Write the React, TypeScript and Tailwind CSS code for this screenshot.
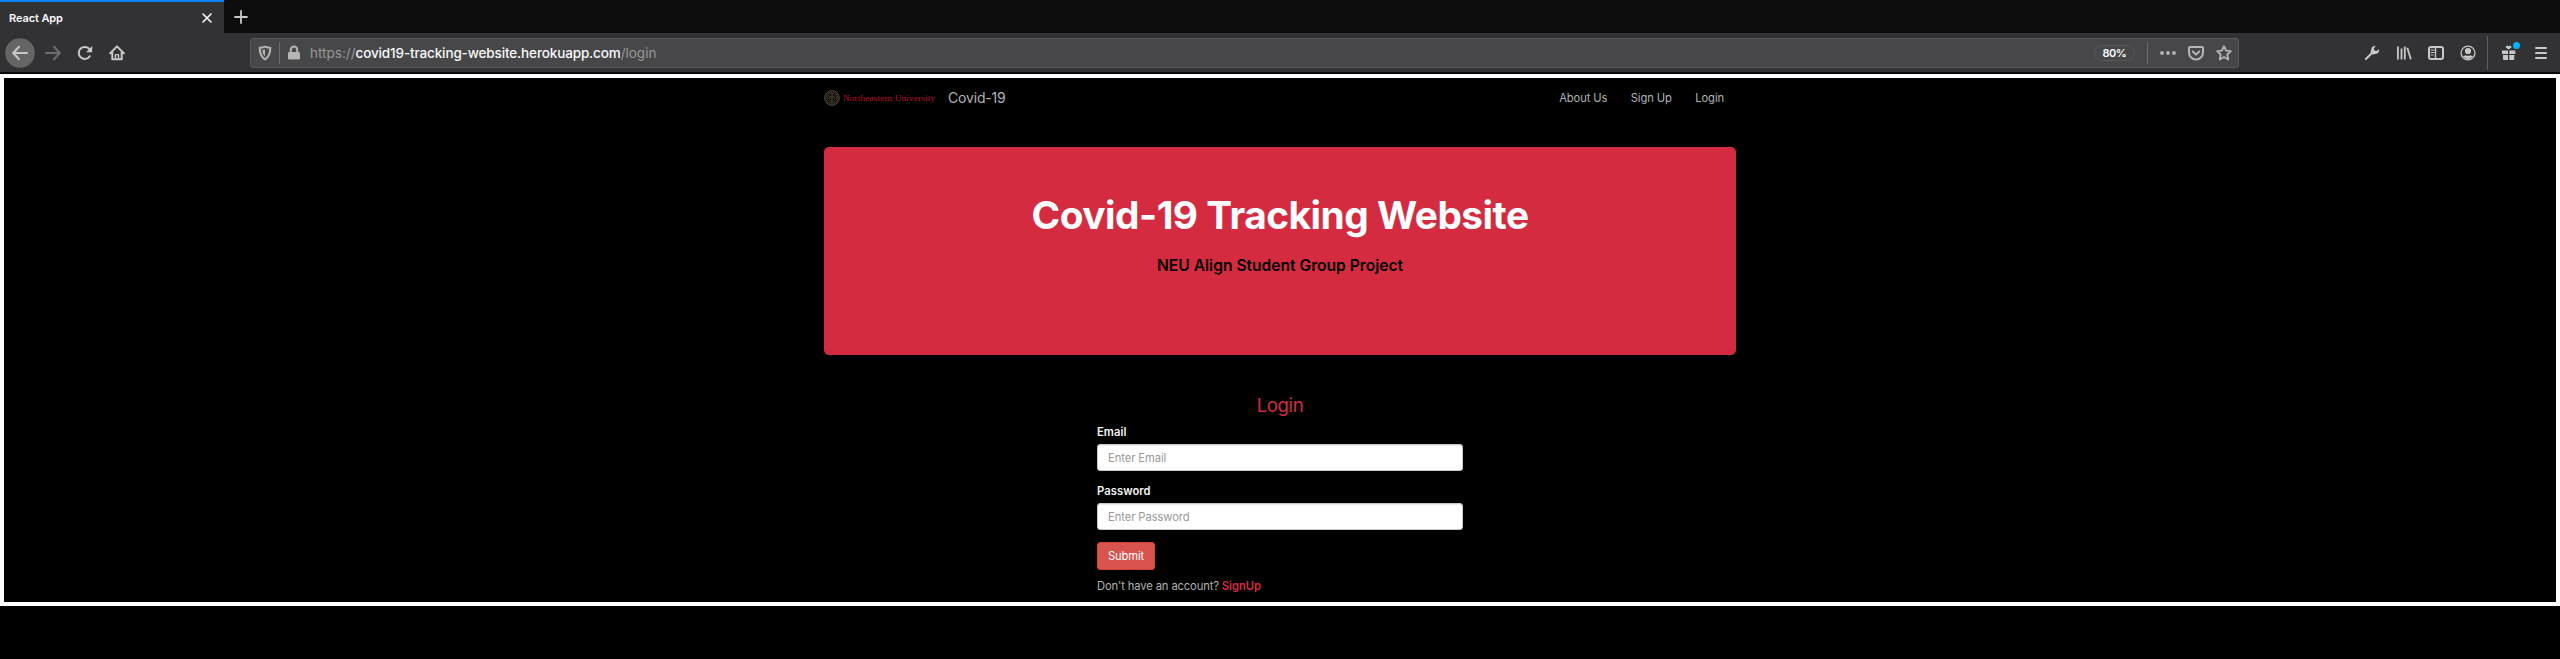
import React from "react";

function Icon({ children, className = "" }: { children: React.ReactNode; className?: string }) {
  return (
    <svg
      viewBox="0 0 16 16"
      className={"block size-4 shrink-0 " + className}
      fill="none"
      stroke="currentColor"
      strokeWidth="2"
      strokeLinecap="round"
      strokeLinejoin="round"
    >
      {children}
    </svg>
  );
}

function TabStrip() {
  return (
    <div className="flex h-[33px] bg-[#0c0c0d]">
      <div className="flex w-56 items-center justify-between border-t-2 border-[#0a84ff] bg-[#323234] pr-[9px] pl-[9px] text-[#f9f9fa]">
        <span className="text-[11px] leading-4 font-semibold tracking-[-0.1px]">React App</span>
        <Icon>
          <path d="M4 4l8 8M12 4l-8 8" strokeWidth="1.600" />
        </Icon>
      </div>
      <div className="flex w-[34px] items-center justify-center text-[#c8c8c9]">
        <Icon>
          <path d="M8 2v12M2 8h12" strokeWidth="1.800" />
        </Icon>
      </div>
    </div>
  );
}

function AddressBar() {
  return (
    <div className="ml-[125px] flex h-[30px] w-[1989px] shrink-0 items-center rounded-[3px] border border-[#58585a] bg-[#474749] text-[#b5b5b6]">
      <Icon className="ml-[6px]">
        <path d="M8 1.6c2 .9 3.800 1.200 5.300 1.200 0 5.200-.9 9-5.300 11.600C3.600 11.800 2.700 8 2.700 2.800c1.500 0 3.300-.3 5.300-1.200z" />
        <path d="M8 4.600v6.800C6.300 10 5.500 7.800 5.400 5.100z" fill="currentColor" stroke="none" />
      </Icon>
      <div className="ml-[6px] h-[22px] w-px bg-[#6a6a6d]" />
      <Icon className="ml-[6px]">
        <path d="M4.800 7V4.700a3.200 3.200 0 0 1 6.400 0V7" />
        <rect x="2" y="7" width="12" height="7.500" rx="1.200" fill="currentColor" stroke="none" />
      </Icon>
      <div className="ml-2 text-[13.5px] leading-5 whitespace-nowrap text-[#98989a]">
        <span>https://</span>
        <span className="font-medium tracking-[-0.13px] text-[#f9f9fa]">covid19-tracking-website.herokuapp.com</span>
        <span>/login</span>
      </div>
      <div className="ml-auto flex h-4 w-[41px] items-center justify-center rounded-full border border-[#58585b] text-[11px] font-semibold tracking-[-0.5px] text-[#f9f9fa]">
        80%
      </div>
      <div className="ml-3 h-[22px] w-px bg-[#6a6a6d]" />
      <Icon className="ml-3">
        <g fill="currentColor" stroke="none">
          <circle cx="2" cy="8" r="1.900" />
          <circle cx="8" cy="8" r="1.900" />
          <circle cx="14" cy="8" r="1.900" />
        </g>
      </Icon>
      <Icon className="ml-3">
        <path d="M2 2h12a1 1 0 0 1 1 1v4.500a7 7 0 0 1-14 0V3a1 1 0 0 1 1-1z" />
        <path d="M4.800 6.500L8 9.600l3.200-3.100" />
      </Icon>
      <Icon className="mr-[6px] ml-3">
        <path
          d="M8 1.200l2.100 4.500 4.700.5-3.500 3.300 1 5L8 12l-4.300 2.500 1-5L1.200 6.200l4.700-.5z"
          strokeWidth="1.800"
        />
      </Icon>
    </div>
  );
}

function Toolbar() {
  return (
    <div className="flex h-10 items-center border-b border-[#0c0c0d] bg-[#323234] pt-px pr-[11px] pl-1 text-[#c8c8c9]">
      <div className="flex size-8 items-center justify-center rounded-full border border-[#2a2a2b] bg-[#656566]">
        <Icon>
          <path d="M15 8H1.500M7 1.800L1.200 8 7 14.200" />
        </Icon>
      </div>
      <Icon className="ml-[9px] text-[#6c6c6e]">
        <path d="M1 8h13.500M9 1.800L14.800 8 9 14.200" />
      </Icon>
      <Icon className="ml-4">
        <path d="M12.800 11.200A6 6 0 1 1 12.600 4.400" />
        <path d="M15.200 1v6.200H9z" fill="currentColor" stroke="none" />
      </Icon>
      <Icon className="ml-4">
        <path d="M1.200 8.200L8 1.400l6.800 6.800M3.300 7.500v6.700h9.400V7.500" />
        <path d="M6.500 14V9.600h3V14" strokeWidth="1.400" />
      </Icon>
      <AddressBar />
      <Icon className="ml-[125px]">
        <path d="M1.900 14.100l6.500-6.500" strokeWidth="2.100" />
        <path
          d="M14.900 4.200l-2.400 1.900-2.100-.6-.6-2.100L11.800 1C9.400.500 6.900 2 7.100 5.200c0 .9-.3 1.300-.8 1.800l2.700 2.700c.5-.5 1-.8 1.800-.8 3.200.2 4.800-2.100 4.100-4.700z"
          fill="currentColor"
          stroke="none"
        />
      </Icon>
      <Icon className="ml-4">
        <path d="M1.900 1.500v13M5.500 3.500v11M8.800 1.500v13M11.300 2.700l3.500 11.500" strokeWidth="1.800" strokeLinecap="butt" />
      </Icon>
      <Icon className="ml-4">
        <rect x="1" y="2" width="14" height="12" rx="2" />
        <path d="M7.500 2v12" strokeWidth="1.400" />
        <path d="M3 5h3M3 7.500h3M3 10h2" strokeWidth="1" />
      </Icon>
      <Icon className="ml-4">
        <circle cx="8" cy="8" r="6.900" strokeWidth="1.300" />
        <circle cx="8" cy="6" r="3.100" fill="currentColor" stroke="none" />
        <path d="M3 11.200c1.300 0 2-1 2.600-1 1 .8 3.800.8 4.800 0 .6 0 1.300 1 2.600 1-1 1.600-3 2.700-5 2.700s-4-1.100-5-2.700z" fill="currentColor" stroke="none" />
      </Icon>
      <div className="ml-[11px] h-[34px] w-px bg-[#5f5f62]" />
      <div className="relative ml-[13px]">
        <Icon>
          <g fill="currentColor" stroke="none">
            <path d="M1 5.500h6V9H1zM8.300 5.500h6V9h-6zM2 10h5v5H3a1 1 0 0 1-1-1zM8.300 10h5v4a1 1 0 0 1-1 1h-4z" />
            <path d="M7.600 4.500L4.800 2.600C4.500 1 6 .2 7.600 1.200c1.600-1 3.100-.2 2.800 1.400z" />
          </g>
        </Icon>
        <div className="absolute -top-[3px] left-3 size-[7px] rounded-full bg-[#00b3ff]" />
      </div>
      <Icon className="ml-4">
        <path d="M3 3h10M3 8h10M3 13h10" />
      </Icon>
    </div>
  );
}

function Seal() {
  return (
    <svg viewBox="0 0 16 16" className="size-4 shrink-0" fill="none" stroke="#5a4d38">
      <circle cx="8" cy="8" r="7.300" strokeWidth="1" />
      <circle cx="8" cy="8" r="6" strokeWidth="1.600" strokeDasharray="1.200 .7" stroke="#463c2c" />
      <circle cx="8" cy="8" r="4.600" strokeWidth=".7" />
      <path d="M5.300 6.200h5.400v2.200c0 1.800-1.300 2.600-2.700 3.200-1.400-.6-2.700-1.400-2.700-3.200zM8 4v7M5.500 8h5" strokeWidth=".8" />
    </svg>
  );
}

function Navbar() {
  return (
    <nav className="flex h-[40px] items-center text-[#b0b4b8]">
      <Seal />
      <span className="ml-[3px] w-[92px] font-['Liberation_Serif',serif] text-[9px] leading-4 tracking-[0.24px] whitespace-nowrap text-[#c00d26]">
        Northeastern University
      </span>
      <span className="ml-[13px] text-[14px] leading-5 tracking-[-0.18px]">Covid-19</span>
      <div className="mr-3 ml-auto flex gap-[23.5px] text-[11.2px] leading-4 tracking-[-0.1px]">
        <span>About Us</span>
        <span>Sign Up</span>
        <span>Login</span>
      </div>
    </nav>
  );
}

function Field({ label, placeholder, type }: { label: string; placeholder: string; type: string }) {
  return (
    <label className="mb-3 block">
      <span className="block h-5 text-[11.2px] leading-4 font-semibold tracking-[0.08px] text-[#f4f4f4]">{label}</span>
      <input
        type={type}
        placeholder={placeholder}
        className="block h-[27px] w-full rounded-[3px] border border-[#c8c8c8] bg-white px-[10px] text-[11.2px] leading-4 tracking-[-0.07px] shadow-[inset_0_1px_1px_rgba(0,0,0,0.075)] placeholder:text-[#999999]"
      />
    </label>
  );
}

export default function App() {
  return (
    <div className="h-[659px] w-[2560px] overflow-hidden bg-black font-[Inter,sans-serif]">
      <TabStrip />
      <Toolbar />
      <main className="mt-px h-[532px] border-4 border-white bg-black">
        <div className="mx-auto w-[912px]">
          <Navbar />
          <section className="mt-[29px] h-[208px] rounded-[5px] bg-[#d42b41] pt-[43px] text-center">
            <h1 className="text-[38.8px] leading-[50px] font-bold tracking-[-0.5px] whitespace-nowrap text-white">Covid-19 Tracking Website</h1>
            <p className="mt-[14px] text-[15.6px] leading-6 font-semibold text-black">NEU Align Student Group Project</p>
          </section>
          <form className="mx-auto mt-[38px] w-[366px]">
            <h2 className="h-[31px] text-center text-[18.6px] leading-6 tracking-[-0.4px] text-[#d42b41]">Login</h2>
            <Field label="Email" placeholder="Enter Email" type="email" />
            <Field label="Password" placeholder="Enter Password" type="password" />
            <button type="button" className="block h-7 w-[58px] rounded-[3px] border border-[#d43f3a] bg-[#d9534f] text-[11.2px] leading-4 tracking-[-0.1px] text-white">
              Submit
            </button>
            <p className="mt-2 text-[11.2px] leading-4 tracking-[-0.12px] whitespace-nowrap text-[#b3b3b3]">
              Don't have an account? <a className="font-semibold tracking-normal text-[#d42b41]">SignUp</a>
            </p>
          </form>
        </div>
      </main>
    </div>
  );
}
